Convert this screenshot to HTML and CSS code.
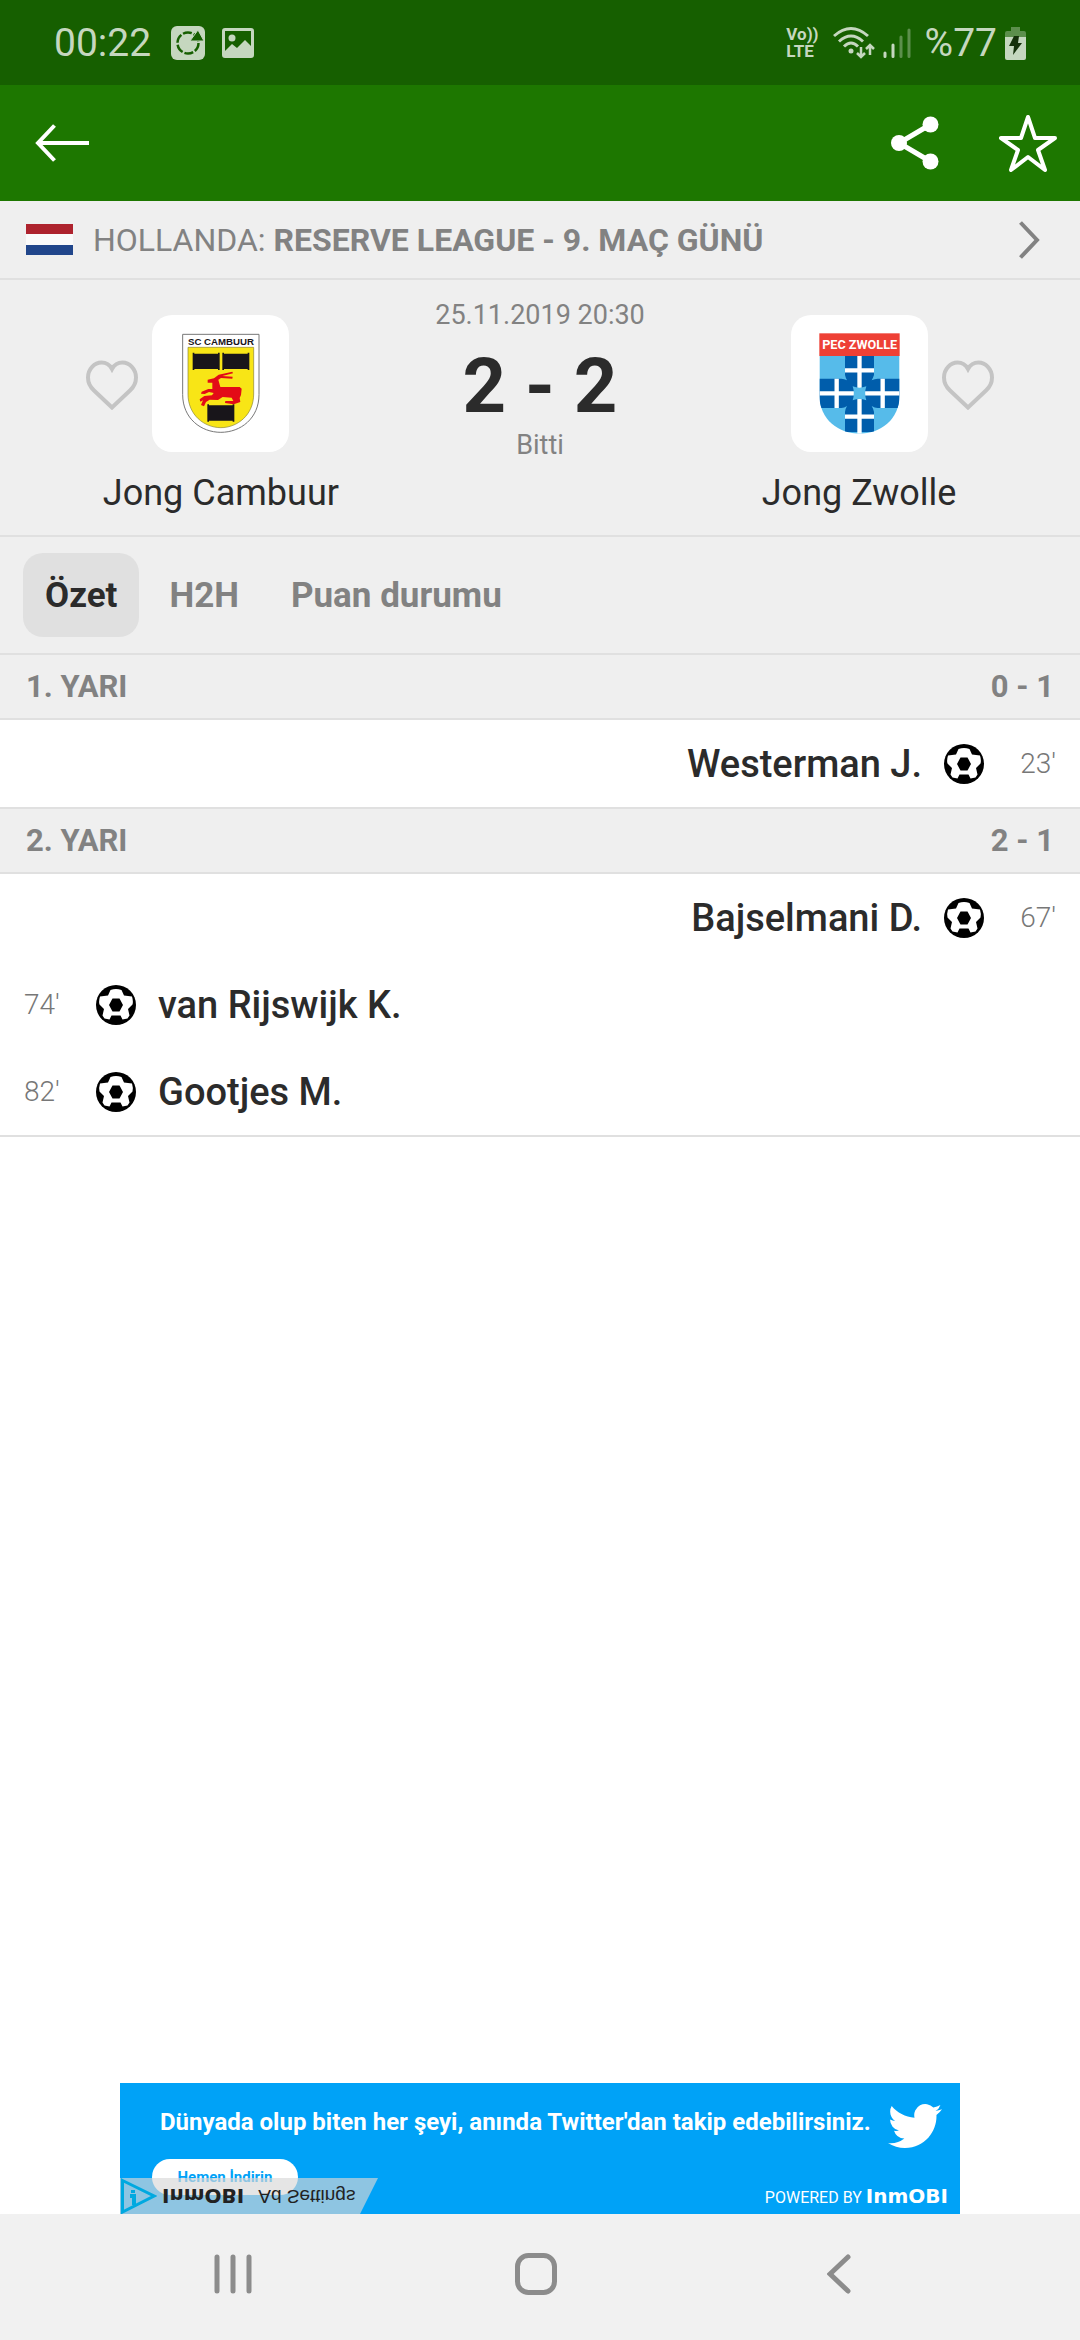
FILE: index.html
```html
<!DOCTYPE html>
<html lang="tr">
<head>
    <meta charset="UTF-8">
    <meta name="viewport" content="width=device-width, initial-scale=1.0">
    <title>Jong Cambuur - Jong Zwolle</title>
    <link rel="stylesheet" href="styles.css">
</head>

<body>
    <!-- ball icon used by every goal row -->
    <svg class="sprite" aria-hidden="true">
        <symbol id="ball" viewBox="0 0 40 40">
            <circle cx="20" cy="20" r="20" fill="#000"/>
            <path d="M14.500 5q5.500-2 11 0l2.500 5.500 8 1q1.500 5 0.500 8l-4.500 4.500 1.500 6.500-2 3-5 1-2-4h-9l-2 4-5-1-2-3 1.500-6.500-4.500-4.500q-1-3 0.500-8l8-1z" fill="#fff"/>
            <path d="M16.500 13.500h7l3.500 6.500-3.500 6.500h-7l-3.500-6.500z" fill="#000"/>
        </symbol>
        <symbol id="heart" viewBox="0 0 52 50">
            <path d="M26 47.500L8 30.500Q2 25 2 17.500C2 9 8.500 2.500 15.500 2.500Q22.500 2.500 26 9Q29.500 2.500 36.500 2.500C43.500 2.500 50 9 50 17.500Q50 25 44 30.500Z" fill="none" stroke="#c4c4c4" stroke-width="4"/>
        </symbol>
    </svg>

    <div class="status">
        <span class="hora">00:22</span>
        <svg width="34" height="34" viewBox="0 0 34 34">
            <rect width="34" height="34" rx="6" fill="#c5d7bf"/>
            <circle cx="17" cy="17" r="10.500" fill="none" stroke="#165f00" stroke-width="2.500" stroke-dasharray="9 2"/>
            <path d="M19 15L27 4l6 11z" fill="#165f00" stroke="#c5d7bf"/>
        </svg>
        <svg class="foto" width="32" height="30" viewBox="0 0 32 30">
            <rect x="1.500" y="1.500" width="29" height="27" rx="1.500" fill="none" stroke="#c5d7bf" stroke-width="3"/>
            <circle cx="10" cy="10" r="3.500" fill="#c5d7bf"/>
            <path d="M2 24l8-8 5 4 8-8 8 8v9H2z" fill="#c5d7bf"/>
        </svg>

        <div class="status-right">
            <span class="volte"><span>Vo))</span><span>LTE</span></span>
            <svg width="42" height="34" viewBox="0 0 42 34">
                <g fill="none" stroke="#c5d7bf" stroke-width="3">
                    <path d="M1 10Q18-5 35 10"/>
                    <path d="M6 15.500Q18 4.500 30 15.500"/>
                    <path d="M11 20.500Q18 13.500 25 20.500"/>
                    <path d="M28 21v10M24 27l4 4 4-4M37 29V19M33 23l4-4 4 4" stroke-width="2.500"/>
                </g>
                <circle cx="18" cy="25" r="2.500" fill="#c5d7bf"/>
            </svg>
            <svg width="28" height="32" viewBox="0 0 28 32">
                <g stroke-width="3" stroke-linecap="round">
                    <path d="M2 26v3.500M10 18v11.500" stroke="#c5d7bf"/>
                    <path d="M18 10v19.500M26 3v26.500" stroke="#5c8f4c"/>
                </g>
            </svg>
            <span class="bateria">%77</span>
            <svg width="21" height="34" viewBox="0 0 21 34">
                <path d="M6 1h9v4h4q2 0 2 2v5H0V7q0-2 2-2h4z" fill="#5c8f4c"/>
                <path d="M0 11h21v21q0 2-2 2H2q-2 0-2-2z" fill="#c5d7bf"/>
                <path d="M9 10h5l-1 7h4L8 29l1-9H4z" fill="#14300a"/>
            </svg>
        </div>
    </div>

    <header>
        <button type="button" aria-label="Geri">
            <svg width="54" height="38" viewBox="0 0 54 38" fill="none" stroke="#fff" stroke-width="4">
                <path d="M54 19H3M19.500 1.500L3 19l16.500 17.500"/>
            </svg>
        </button>
        <div class="acoes">
            <button type="button" aria-label="Paylaş">
                <svg width="48" height="54" viewBox="0 0 48 54" fill="#fff">
                    <path d="M39.500 8.500L8 27l31.500 18.500" fill="none" stroke="#fff" stroke-width="5"/>
                    <circle cx="8" cy="27" r="8"/>
                    <circle cx="39.500" cy="8.500" r="8"/>
                    <circle cx="39.500" cy="45.500" r="8"/>
                </svg>
            </button>
            <button type="button" aria-label="Favori">
                <svg width="58" height="58" viewBox="0 0 58 58" fill="none" stroke="#fff" stroke-width="4" stroke-linejoin="round">
                    <path d="M29 3l7 21h20L39 36l7 20-17-13-17 13 7-20L2 24h20z"/>
                </svg>
            </button>
        </div>
    </header>

    <a class="liga" href="#">
        <svg width="47" height="31" viewBox="0 0 47 31">
            <rect width="47" height="31" fill="#fafafa"/>
            <rect width="47" height="10" fill="#ae232e"/>
            <rect y="21" width="47" height="10" fill="#21468b"/>
        </svg>
        <span class="liga-nome">HOLLANDA: <b>RESERVE LEAGUE - 9. MAÇ GÜNÜ</b></span>
        <svg width="21" height="38" viewBox="0 0 21 38" fill="none" stroke="#828282" stroke-width="4">
            <path d="M1.500 1.500L18 19 1.500 36.500"/>
        </svg>
    </a>

    <section class="jogo">
        <div class="time">
            <div class="escudo">
                <button class="curtir casa" type="button" aria-label="Jong Cambuur favori">
                    <svg width="52" height="50"><use href="#heart"/></svg>
                </button>
                <svg width="137" height="137" viewBox="6 15 411 411">
                    <path d="M98 73H327V254C327 325 272 367 212.500 367S98 325 98 254Z" fill="#fff" stroke="#777" stroke-width="3"/>
                    <path d="M114 112H311V252C311 315 262 353 212.500 353S114 315 114 252Z" fill="#f8e516" stroke="#8a8430" stroke-width="2"/>
                    <text x="213" y="105" text-anchor="middle" class="nome-cambuur">SC CAMBUUR</text>
                    <path d="M128 128h5v3h71v-3h5v52h-5v-3h-71v3h-5zM217 128h5v3h71v-3h5v52h-5v-3h-71v3h-5zM172 283h5v3h71v-3h5v52h-5v-3h-71v3h-5z" fill="#18151a"/>
                    <path d="M173 209l19-4 14-11 41-9 2 5-32 8 31 2-1 6-34-2-8 5 6 22 58 0 6 5-2 19-4 9 2 12-20 7-26-4 1-6 24 0-5-10-27-2-14 9-25-1-11 7-6 13-9-4 6-14-8 4-2-7 14-10 23-2 5-7-14-3-13 6-11-1 2-6 20-8 12 0 0-19-14 0z" fill="#e30b17"/>
                </svg>
            </div>
            <p>Jong Cambuur</p>
        </div>

        <div class="placar">
            <p class="detalhe">25.11.2019 20:30</p>
            <h1>2 - 2</h1>
            <p class="detalhe">Bitti</p>
        </div>

        <div class="time">
            <div class="escudo">
                <svg width="137" height="137" viewBox="0 15 411 411">
                    <clipPath id="forma"><path d="M85 138H326V254C326 330 266 371 205.500 371S85 330 85 254Z"/></clipPath>
                    <g clip-path="url(#forma)">
                        <rect x="85" y="138" width="241" height="234" fill="#56bbea"/>
                        <path d="M162 138h87v57q-3 9-7 16q9-5 18-5h66v88h-66q-9 0-18-6q5 8 7 18v60h-87v-60q1-10 6-18q-8 6-17 6H85v-88h66q9 0 17 5q-4-7-6-16z" fill="#005dab"/>
                        <path d="M205.500 138v234M85 250h241M162 181h87M162 320h87M137 206v88M275 206v88" fill="none" stroke="#fff" stroke-width="13"/>
                        <path d="M185 229q20 8 41 0-7 21 0 42-20-8-41 0 7-21 0-42z" fill="#56bbea"/>
                    </g>
                    <rect x="85" y="70" width="241" height="68" fill="#ee4035"/>
                    <text x="206" y="118" text-anchor="middle" class="nome-zwolle">PEC ZWOLLE</text>
                </svg>
                <button class="curtir fora" type="button" aria-label="Jong Zwolle favori">
                    <svg width="52" height="50"><use href="#heart"/></svg>
                </button>
            </div>
            <p>Jong Zwolle</p>
        </div>
    </section>

    <nav class="abas">
        <button class="ativa" type="button">Özet</button>
        <button type="button">H2H</button>
        <button type="button">Puan durumu</button>
    </nav>

    <main>
        <h2><span>1. YARI</span><span>0 - 1</span></h2>
        <ul>
            <li class="direita"><span class="minuto">23'</span><svg width="40" height="40"><use href="#ball"/></svg><span>Westerman J.</span></li>
        </ul>
        <h2><span>2. YARI</span><span>2 - 1</span></h2>
        <ul>
            <li class="direita"><span class="minuto">67'</span><svg width="40" height="40"><use href="#ball"/></svg><span>Bajselmani D.</span></li>
            <li><span class="minuto">74'</span><svg width="40" height="40"><use href="#ball"/></svg><span>van Rijswijk K.</span></li>
            <li><span class="minuto">82'</span><svg width="40" height="40"><use href="#ball"/></svg><span>Gootjes M.</span></li>
        </ul>
    </main>

    <aside class="anuncio">
        <div class="anuncio-topo">
            <p>Dünyada olup biten her şeyi, anında Twitter'dan takip edebilirsiniz.</p>
            <svg width="54" height="46" viewBox="0 2 24 20" fill="#fff">
                <path d="M23.950 4.570a10 10 0 01-2.820.770 4.960 4.960 0 002.160-2.720c-.950.550-2 .950-3.130 1.180a4.920 4.920 0 00-8.380 4.480C7.690 8.100 4.070 6.130 1.640 3.160a4.820 4.820 0 00-.670 2.480c0 1.710.870 3.210 2.190 4.100a4.900 4.900 0 01-2.230-.620v.060a4.920 4.920 0 003.950 4.830 5 5 0 01-2.210.080 4.940 4.940 0 004.600 3.420A9.870 9.870 0 010 19.540a13.990 13.990 0 007.550 2.210c9.050 0 14-7.500 14-13.980 0-.210 0-.420-.020-.630a9.940 9.940 0 002.460-2.550z"/>
            </svg>
        </div>
        <button class="indir" type="button">Hemen İndirin</button>
        <p class="powered">POWERED BY <b>InmOBI</b></p>
        <!-- the provider's label is drawn upside down -->
        <div class="ayarlar">
            <svg width="37" height="36" viewBox="0 0 37 36">
                <path d="M2.500 2.500L34 18 2.500 34z" fill="none" stroke="#00a9e0" stroke-width="3"/>
                <path d="M13 12v3M10 18h4v9" fill="none" stroke="#00a9e0" stroke-width="4"/>
            </svg>
            <a href="#"><b>InmOBI</b><span>Ad Settings</span></a>
        </div>
    </aside>

    <footer>
        <button type="button" aria-label="Son uygulamalar">
            <svg width="38" height="42" viewBox="0 0 38 42" stroke="#8c8c8c" stroke-width="5" stroke-linecap="round">
                <path d="M3 4v34M19 4v34M35 4v34"/>
            </svg>
        </button>
        <button type="button" aria-label="Ana ekran">
            <svg width="42" height="42" viewBox="0 0 42 42" fill="none" stroke="#8c8c8c" stroke-width="5">
                <rect x="2.500" y="2.500" width="37" height="37" rx="11"/>
            </svg>
        </button>
        <button type="button" aria-label="Geri dön">
            <svg width="24" height="42" viewBox="0 0 24 42" fill="none" stroke="#8c8c8c" stroke-width="5" stroke-linecap="round">
                <path d="M21 4L3 21l18 17"/>
            </svg>
        </button>
    </footer>
</body>
</html>
```
FILE: styles.css
```css
*{
    box-sizing: border-box;
}

body{
    margin: 0;
    min-height: 100vh;
    display: flex;
    flex-direction: column;
    background: white;
    color: #2b2b2b;
    font-family: Roboto, Arial, sans-serif;
}

p, h1, h2, ul{
    margin: 0;
    padding: 0;
}

a{
    color: inherit;
    text-decoration: none;
}

svg{
    display: block;
    flex: none;
}

button{
    margin: 0;
    padding: 0;
    border: none;
    background: none;
    color: inherit;
    font-family: inherit;
}

.sprite{
    position: absolute;
    width: 0;
    height: 0;
}

.status{
    display: flex;
    align-items: center;
    height: 85px;
    padding: 0 54px;
    background: #165f00;
    color: #c5d7bf;
    font-size: 39px;
}

.hora{
    margin-right: 20px;
}

.foto{
    margin-left: 17px;
}

.status-right{
    display: flex;
    align-items: center;
    margin-left: auto;
}

.volte{
    display: flex;
    flex-direction: column;
    margin-right: 14px;
    font-size: 17px;
    font-weight: bold;
    line-height: 17px;
}

.bateria{
    margin: 0 8px 0 14px;
}

.status-right svg + svg{
    margin-left: 8px;
}

header{
    display: flex;
    align-items: center;
    justify-content: space-between;
    height: 116px;
    padding: 0 23px 0 35px;
    background: #1d7700;
}

.acoes{
    display: flex;
    align-items: center;
    gap: 60px;
}

.liga{
    display: flex;
    align-items: center;
    height: 79px;
    padding: 0 40px 0 26px;
    background: #efefef;
    border-bottom: 2px solid #e0e0e0;
    color: #828282;
    font-size: 32px;
}

.liga-nome{
    flex: 1;
    padding-left: 20px;
}

.jogo{
    display: grid;
    grid-template-columns: minmax(0, 9fr) minmax(0, 4fr) minmax(0, 9fr);
    padding: 18px 0 20px;
    background: #efefef;
    border-bottom: 2px solid #e0e0e0;
    text-align: center;
}

.time{
    padding-top: 17px;
    font-size: 36px;
    line-height: 44px;
}

.time p{
    margin-top: 19px;
}

.escudo{
    position: relative;
    width: 137px;
    margin: 0 auto;
    background: white;
    border-radius: 20px;
}

.curtir{
    position: absolute;
    top: 45px;
}

.casa{
    right: 151px;
}

.fora{
    left: 151px;
}

.nome-cambuur{
    font: bold 29px "Liberation Sans", Arial, sans-serif;
    fill: #18151a;
}

.nome-zwolle{
    font: bold 38px Roboto, Arial, sans-serif;
    fill: white;
}

.placar{
    display: flex;
    flex-direction: column;
    align-items: center;
    white-space: nowrap;
}

.detalhe{
    color: #828282;
    font-size: 27px;
    line-height: 34px;
}

h1{
    padding-top: 12px;
    font-size: 76px;
    line-height: 84px;
}

.abas{
    display: flex;
    padding: 16px 23px;
    background: #efefef;
    border-bottom: 2px solid #e0e0e0;
    color: #828282;
}

.abas button{
    height: 84px;
    padding: 0 22px;
    margin-right: 8px;
    border-radius: 20px;
    font-size: 35px;
    font-weight: bold;
}

.abas .ativa{
    background: #e0e0e0;
    color: #2b2b2b;
}

main{
    flex: 1;
}

h2{
    display: flex;
    justify-content: space-between;
    align-items: center;
    height: 65px;
    padding: 0 26px;
    background: #efefef;
    border-bottom: 2px solid #e0e0e0;
    color: #828282;
    font-size: 31px;
}

ul{
    list-style: none;
    border-bottom: 2px solid #e0e0e0;
}

li{
    display: flex;
    align-items: center;
    gap: 22px;
    height: 87px;
    padding: 0 24px;
    font-size: 38px;
    font-weight: 500;
}

.minuto{
    width: 50px;
    color: #777;
    font-size: 28px;
    font-weight: 300;
}

.direita{
    flex-direction: row-reverse;
}

.direita .minuto{
    text-align: right;
}

.anuncio{
    position: relative;
    width: 840px;
    height: 131px;
    max-width: 100%;
    margin: 0 auto;
    overflow: hidden;
    background: #00a2f7;
    color: white;
    font-family: Roboto, Arial, sans-serif;
}

.anuncio-topo{
    display: flex;
    align-items: flex-start;
    justify-content: space-between;
    padding: 20px 18px 0 40px;
    font-size: 24px;
    font-weight: bold;
    line-height: 38px;
}

.indir{
    display: block;
    width: 146px;
    height: 36px;
    margin: 10px 0 0 32px;
    border-radius: 18px;
    background: white;
    color: #00a2f7;
    font-size: 15px;
    font-weight: bold;
}

.powered{
    position: absolute;
    right: 12px;
    bottom: 6px;
    font-size: 16px;
}

.powered b{
    font: bold 20px "DejaVu Sans", sans-serif;
}

.ayarlar{
    position: absolute;
    left: 0;
    bottom: 0;
    display: flex;
    width: 258px;
    height: 36px;
    background: rgba(215, 215, 215, 0.66);
    color: #222;
    clip-path: polygon(0 0, 100% 0, 240px 100%, 0 100%);
}

.ayarlar a{
    display: flex;
    align-items: center;
    gap: 14px;
    padding-left: 5px;
    transform: scaleY(-1);
    font: 19px "Liberation Sans", Arial, sans-serif;
}

.ayarlar b{
    font: bold 20px "DejaVu Sans", sans-serif;
}

footer{
    display: grid;
    grid-template-columns: repeat(3, 1fr);
    height: 126px;
    padding: 0 90px 6px 82px;
    background: #f1f1f1;
}

footer button{
    display: flex;
    align-items: center;
    justify-content: center;
}
```
